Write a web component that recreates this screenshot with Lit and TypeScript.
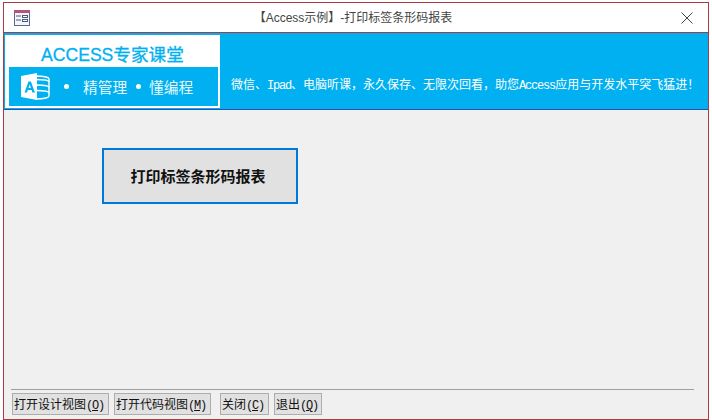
import { LitElement, html, css } from "lit";
import { customElement } from "lit/decorators.js";

@customElement("app-root")
export class AppRoot extends LitElement {
  static styles = css`
    :host { display: block; background: #fff; width: 712px; height: 420px; padding: 2px 3px 0; box-sizing: border-box; font-family: "Noto Sans CJK SC", sans-serif; overflow: hidden; }
    .win { box-sizing: border-box; width: 706px; height: 418px; border: 1px solid #a93b42; display: flex; flex-direction: column; background: #f0f0f0; }
    .title { box-sizing: border-box; height: 30px; flex: none; background: #fff; border-bottom: 1px solid #a93b42; display: flex; align-items: center; padding: 0 15px 0 10px; color: #444; font-size: 12px; }
    .title svg { display: block; flex: none; }
    .title span { flex: 1; text-align: center; line-height: 16px; padding-right: 6px; font-family: "Noto Sans CJK SC", sans-serif; }
    .title span b { font-weight: 400; font-family: "Liberation Sans", "Noto Sans CJK SC", sans-serif; }
    .banner { box-sizing: border-box; height: 77px; flex: none; background: #00b0f0; border-bottom: 1px solid #2a4fb5; padding: 2px 0 0 1px; display: flex; align-items: flex-start; color: #fff; }
    .logo { box-sizing: border-box; width: 215px; height: 73px; background: #fff; padding: 0 2px 2px 4px; display: flex; flex-direction: column; flex: none; }
    .logo h1 { margin: 0; height: 32px; box-sizing: border-box; padding: 9px 0 0 32px; font-size: 17.6px; line-height: 22px; font-weight: 400; color: #00b0f0; -webkit-text-stroke: 0.3px #00b0f0; font-family: "Liberation Sans", "Noto Sans CJK SC", sans-serif; white-space: nowrap; }
    .inner { height: 39px; background: #00b0f0; display: flex; align-items: center; padding-left: 12px; font-size: 14.7px; color: #e6f7fe; }
    .inner svg { display: block; flex: none; }
    .dot { width: 5px; height: 5px; border-radius: 50%; background: #fff; flex: none; }
    .d1 { margin: 0 14px 0 14px; }
    .d2 { margin: 0 8px 0 9px; }
    .slogan { font-size: 12px; line-height: 16px; margin: 41px 0 0 11px; white-space: nowrap; }
    .latin { font-family: "Liberation Mono", monospace; font-size: 12px; letter-spacing: -1.2px; }
    .body { flex: 1; display: flex; flex-direction: column; padding: 38px 0 4px; }
    .main { box-sizing: border-box; width: 196px; height: 56px; margin-left: 98px; background: #e1e1e1; border: 2px solid #0078d7; color: #111; font: 700 15px/1 "Noto Sans CJK SC", sans-serif; padding: 0 4px 2px 0; }
    .foot { margin-top: auto; }
    .rule { height: 1px; margin: 0 14px 3px 7px; background: #a0a0a0; }
    .btns { display: flex; gap: 5px; padding-left: 8px; }
    .btn { box-sizing: border-box; height: 22px; background: #e1e1e1; border: 1px solid #adadad; padding: 0 0 0 1px; color: #111; font: 12px/20px "Noto Sans CJK SC", sans-serif; white-space: nowrap; display: block; text-align: left; }
    .btn.after { margin-left: 4px; }
    .btn u { text-underline-offset: 1px; }
  `;

  private latin(s: string) { return html`<span class="latin">${s}</span>`; }

  render() {
    const btns = [
      { t: "打开设计视图", k: "O", w: 97, c: "" },
      { t: "打开代码视图", k: "M", w: 97, c: "" },
      { t: "关闭", k: "C", w: 49, c: "after" },
      { t: "退出", k: "Q", w: 48, c: "" },
    ];
    const comma = "\uFF0C";
    const bang = "\uFF01";
    return html`
      <div class="win">
        <div class="title">
          <svg width="17" height="16" viewBox="0 0 17 16">
            <rect x="0.5" y="0.5" width="15" height="15" fill="#f4f6fb" stroke="#5a6a8c"/>
            <rect x="0" y="0" width="16" height="3" fill="#b8527a"/>
            <path d="M2 6h5M2 10h5" stroke="#4a5a7c" fill="none"/>
            <rect x="8.5" y="5.5" width="5" height="2" fill="#fff" stroke="#4a5a7c"/>
            <rect x="8.5" y="9.5" width="5" height="2" fill="#fff" stroke="#4a5a7c"/>
          </svg>
          <span>【<b>Access</b>示例】<b>-</b>打印标签条形码报表</span>
          <svg width="12" height="12" viewBox="0 0 12 12"><path d="M0.5 0.5L11.5 11.5M11.5 0.5L0.5 11.5" stroke="#444" fill="none"/></svg>
        </div>
        <div class="banner">
          <div class="logo">
            <h1>ACCESS专家课堂</h1>
            <div class="inner">
              <svg width="29" height="27" viewBox="0 0 29 27">
                <path d="M15 3c6 0 13 1 13 3v17c0 2-7 3-13 3z" fill="none" stroke="#fff" stroke-width="1.4"/>
                <path d="M15 6.5c5 0 13 .5 13 2.5M15 12c5 0 13 .2 13 2.5M15 17.5c5 0 13 .2 13 2.5" fill="none" stroke="#fff" stroke-width="1.6"/>
                <path d="M0 3L16 0V27L0 24z" fill="#fff"/>
                <path d="M3.5 19.5L7.5 8.5h2.4l4 11h-2.5l-.8-2.4H6.8L6 19.5zM7.5 15h2.4L8.7 11.2z" fill="#00b0f0"/>
              </svg>
              <i class="dot d1"></i><span>精管理</span><i class="dot d2"></i><span>懂编程</span>
            </div>
          </div>
          <div class="slogan">微信、${this.latin("Ipad")}、电脑听课${comma}永久保存、无限次回看${comma}助您${this.latin("Access")}应用与开发水平突飞猛进${bang}</div>
        </div>
        <div class="body">
          <button class="main">打印标签条形码报表</button>
          <div class="foot">
            <div class="rule"></div>
            <div class="btns">
              ${btns.map(b => html`<button class="btn ${b.c}" style="width:${b.w}px">${b.t}<span class="latin">(<u>${b.k}</u>)</span></button>`)}
            </div>
          </div>
        </div>
      </div>
    `;
  }
}
